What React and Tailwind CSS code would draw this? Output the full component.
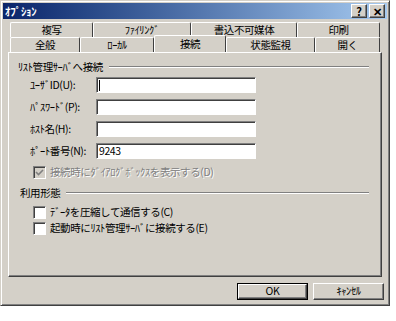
import React from 'react'

const font = { fontFamily: '"Noto Sans CJK JP", "Liberation Sans", sans-serif' }

const raised =
  'border border-t-white border-l-white border-r-[#404040] border-b-[#404040] shadow-[inset_-1px_-1px_0_#808080]'

const txt = 'text-[10.5px] leading-none tracking-[-0.4px] whitespace-nowrap'

const TitleButton = ({ children }) => (
  <div className={`w-[16px] h-[14px] bg-[#d4d0c8] flex items-center justify-center text-[11px] font-bold text-black leading-none ${raised}`}>
    {children}
  </div>
)

const Tab = ({ label, width, selected }) => (
  <div
    className={`flex items-center justify-center ${txt} text-black border-t border-l border-r border-t-white border-l-white border-r-[#404040] rounded-t-[2px] bg-[#d4d0c8] ${
      selected ? 'h-[17px] -mt-[2px] -mb-[1px] relative z-10' : 'h-[15px]'
    }`}
    style={{ width }}
  >
    {label}
  </div>
)

const Field = ({ label, value, caret }) => (
  <div className="flex items-center h-[16px]">
    <span className={`w-[66px] ${txt}`}>{label}</span>
    <div className={`w-[160px] h-[16px] bg-white border border-t-[#808080] border-l-[#808080] border-r-white border-b-white shadow-[inset_1px_1px_0_#404040] flex items-center pl-[2px] ${txt}`}>
      {caret && <span className="w-[1px] h-[11px] bg-black" />}
      {value}
    </div>
  </div>
)

const Check = ({ label, disabled, checked }) => (
  <div className="flex items-center h-[14px] gap-[4px]">
    <div
      className={`w-[13px] h-[13px] border border-t-[#808080] border-l-[#808080] border-r-white border-b-white shadow-[inset_1px_1px_0_#404040] flex items-center justify-center ${
        disabled ? 'bg-[#d4d0c8]' : 'bg-white'
      }`}
    >
      {checked && (
        <svg width="9" height="9" viewBox="0 0 9 9">
          <path d="M1 4 L3.5 6.5 L8 2" stroke={disabled ? '#808080' : '#000'} strokeWidth="1.6" fill="none" />
        </svg>
      )}
    </div>
    <span className={`${txt} ${disabled ? 'text-[#808080] [text-shadow:1px_1px_0_#fff]' : 'text-black'}`}>
      {label}
    </span>
  </div>
)

const GroupTitle = ({ label }) => (
  <div className="flex items-center gap-[6px] h-[14px]">
    <span className={txt}>{label}</span>
    <div className="flex-1 border-t border-t-[#808080] border-b border-b-white" />
  </div>
)

export default function App() {
  return (
    <div className="w-[396px] h-[321px] bg-white" style={font}>
      <div className="w-[390px] h-[306px] bg-[#d4d0c8] border border-t-[#d4d0c8] border-l-[#d4d0c8] border-r-[#404040] border-b-[#404040] shadow-[inset_1px_1px_0_#fff,inset_-1px_-1px_0_#808080] p-[2px] flex flex-col">
        <div className="h-[16px] bg-gradient-to-r from-[#0a246a] to-[#a6caf0] flex items-center justify-between pl-[2px] pr-[2px]">
          <span className="text-white text-[11px] font-bold leading-none tracking-[-0.3px]">ｵﾌﾟｼｮﾝ</span>
          <div className="flex gap-[2px]">
            <TitleButton>?</TitleButton>
            <TitleButton>✕</TitleButton>
          </div>
        </div>

        <div className="flex flex-col pl-[5px] pt-[3px]">
          <div className="flex pl-[2px]">
            <Tab label="複写" width={83} />
            <Tab label="ﾌｧｲﾘﾝｸﾞ" width={98} />
            <Tab label="書込不可媒体" width={106} />
            <Tab label="印刷" width={83} />
          </div>
          <div className="flex pl-[2px]">
            <Tab label="全般" width={70} />
            <Tab label="ﾛｰｶﾙ" width={74} />
            <Tab label="接続" width={72} selected />
            <Tab label="状態監視" width={89} />
            <Tab label="開く" width={65} />
          </div>

          <div className="w-[374px] h-[225px] border border-t-white border-l-white border-r-[#404040] border-b-[#404040] shadow-[inset_-1px_-1px_0_#808080] pl-[9px] pr-[12px] pt-[7px] text-black">
            <GroupTitle label="ﾘｽﾄ管理ｻｰﾊﾞへ接続" />
            <div className="flex flex-col gap-[6px] pl-[12px] mt-[3px]">
              <Field label="ﾕｰｻﾞID(U):" caret />
              <Field label="ﾊﾟｽﾜｰﾄﾞ(P):" />
              <Field label="ﾎｽﾄ名(H):" />
              <Field label="ﾎﾟｰﾄ番号(N):" value="9243" />
            </div>
            <div className="pl-[15px] mt-[6px]">
              <Check label="接続時にﾀﾞｲｱﾛｸﾞﾎﾞｯｸｽを表示する(D)" disabled checked />
            </div>
            <div className="mt-[7px] pl-[2px]">
              <GroupTitle label="利用形態" />
            </div>
            <div className="flex flex-col gap-[2px] pl-[15px] mt-[5px]">
              <Check label="ﾃﾞｰﾀを圧縮して通信する(C)" />
              <Check label="起動時にﾘｽﾄ管理ｻｰﾊﾞに接続する(E)" />
            </div>
          </div>

          <div className="flex justify-end gap-[5px] pr-[3px] mt-[6px]">
            <div className="w-[71px] h-[17px] border border-black">
              <div className={`w-full h-full flex items-center justify-center ${txt} ${raised}`}>OK</div>
            </div>
            <div className={`w-[71px] h-[17px] flex items-center justify-center ${txt} ${raised}`}>ｷｬﾝｾﾙ</div>
          </div>
        </div>
      </div>
    </div>
  )
}
